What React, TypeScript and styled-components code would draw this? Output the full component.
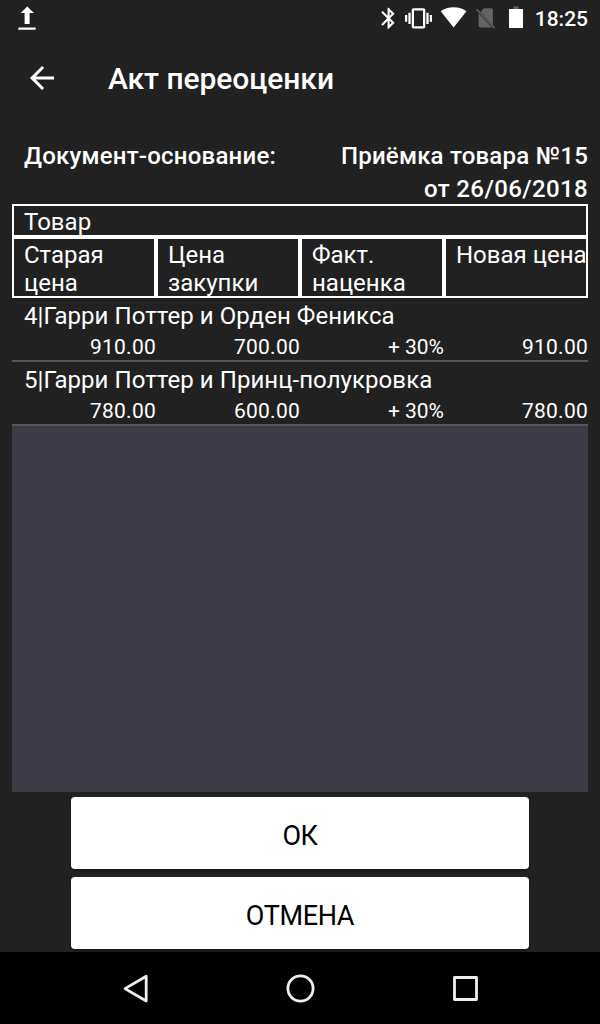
import React from "react";
import styled, { createGlobalStyle } from "styled-components";

const GlobalStyle = createGlobalStyle`
  *, *::before, *::after { box-sizing: border-box; }
  body { margin: 0; background: #212121; }
`;

const Screen = styled.div`
  display: flex;
  flex-direction: column;
  width: 600px;
  height: 1024px;
  background: #212121;
  color: #fff;
  font-family: Roboto, sans-serif;
  font-size: 24px;
  line-height: 28px;
`;

const StatusBar = styled.header`
  display: flex;
  align-items: center;
  height: 36px;
  padding: 0 12px 0 18px;

  svg { display: block; flex: none; }
`;

const StatusIcons = styled.div`
  display: flex;
  align-items: center;
  gap: 8px;
  margin-left: auto;
`;

const Clock = styled.time`
  width: 54px;
  margin-left: 11px;
  padding-top: 2px;
  font-size: 21px;
  font-weight: 500;
  line-height: 36px;
  text-align: right;
  white-space: nowrap;
`;

const Toolbar = styled.div`
  display: flex;
  align-items: center;
  height: 84px;
  padding-left: 24px;
`;

const BackButton = styled.button`
  display: flex;
  width: 36px;
  height: 36px;
  padding: 0;
  border: 0;
  background: none;
  color: #fff;
`;

const Title = styled.h1`
  margin: 2px 0 0 48px;
  font-size: 30px;
  font-weight: 500;
  letter-spacing: -0.05px;
  line-height: 36px;
  white-space: nowrap;
`;

const Main = styled.main`
  display: flex;
  flex: 1;
  flex-direction: column;
  padding: 20px 12px 0;
`;

const Basis = styled.div`
  display: flex;
  justify-content: space-between;
  height: 64px;
  padding-left: 12px;
  font-weight: 500;
  letter-spacing: 0.22px;
  line-height: 33px;
`;

const BasisValue = styled.div`
  text-align: right;
  white-space: nowrap;
`;

const BasisDate = styled.div`
  letter-spacing: 0.38px;
`;

const HeadRow = styled.div`
  display: grid;
  grid-template-columns: repeat(4, 144px);
`;

const HeadCell = styled.div<{ $wide?: boolean }>`
  grid-column: ${({ $wide }) => ($wide ? "1 / -1" : "auto")};
  height: ${({ $wide }) => ($wide ? 33 : 61)}px;
  padding: 2px 0 0 10px;
  border: 2px solid #fff;
  white-space: pre;
`;

const List = styled.div`
  flex: none;
  height: 494px;
  background: #3d3c46;
`;

const Item = styled.div`
  height: 64px;
  padding-top: 4px;
  border-bottom: 2px solid #55555e;
  background: #212121;
`;

const ItemName = styled.div`
  padding-left: 12px;
  letter-spacing: 0.06px;
  white-space: nowrap;
`;

const ItemValues = styled.div`
  display: grid;
  grid-template-columns: repeat(4, 144px);
  padding-top: 4px;
  font-size: 21px;
  line-height: 26px;
  text-align: right;
`;

const Value = styled.span<{ $percent: boolean }>`
  letter-spacing: ${({ $percent }) => ($percent ? "0" : "0.25px")};
`;

const Actions = styled.div`
  display: flex;
  flex-direction: column;
  align-items: center;
  gap: 8px;
  padding-top: 5px;
`;

const ActionButton = styled.button`
  width: 458px;
  height: 72px;
  padding: 6px 0 0;
  border: 0;
  border-radius: 4px;
  background: #fff;
  box-shadow: 0 2px 2px rgba(0, 0, 0, 0.3);
  color: #000;
  font: 400 27px/32px Roboto, sans-serif;
  letter-spacing: -0.35px;
`;

const NavBar = styled.nav`
  display: flex;
  flex: none;
  justify-content: center;
  align-items: center;
  gap: 129px;
  height: 72px;
  background: #000;

  svg { display: block; }
`;

const products = [
  { name: "4|Гарри Поттер и Орден Феникса", values: ["910.00", "700.00", "+ 30%", "910.00"] },
  { name: "5|Гарри Поттер и Принц-полукровка", values: ["780.00", "600.00", "+ 30%", "780.00"] },
];

const columns = ["Старая\nцена", "Цена\nзакупки", "Факт.\nнаценка", "Новая цена"];

const UploadIcon = () => (
  <svg width="18" height="36" fill="#fff">
    <path d="M9.3 6.5 16 13h-4.4v11h-5V13H2.6zM.3 27.4h17.4v2.3H.3z" />
  </svg>
);

const BluetoothIcon = () => (
  <svg width="21" height="36" fill="#fff">
    <path
      transform="translate(0 5.7) scale(1.05)"
      d="M17.71 7.71 12 2h-1v7.590L6.410 5 5 6.410 10.590 12 5 17.590 6.410 19 11 14.410V22h1l5.710-5.710-4.300-4.290 4.300-4.290zM13 5.830l1.880 1.880L13 9.590V5.830zm1.880 10.460L13 18.170v-3.760l1.880 1.880z"
    />
  </svg>
);

const VibrateIcon = () => (
  <svg width="27" height="36" fill="#fff">
    <path
      transform="translate(0 4.8) scale(1.125)"
      d="M0 15h2V9H0v6zm3 2h2V7H3v10zm19-8v6h2V9h-2zm-3 8h2V7h-2v10zM16.500 3h-9C6.670 3 6 3.670 6 4.500v15c0 .830.670 1.500 1.500 1.500h9c.830 0 1.500-.670 1.500-1.500v-15c0-.830-.670-1.500-1.500-1.500zM16 19H8V5h8v14z"
    />
  </svg>
);

const WifiIcon = () => (
  <svg width="28" height="36" fill="#fff">
    <path d="M13.600 27.500.7 11.300C4.200 8.700 8.600 7.200 13.600 7.200s9.400 1.500 12.900 4.100z" />
  </svg>
);

const NoSimIcon = () => (
  <svg width="20" height="36">
    <path d="M7.700 8.300h7.500c1 0 1.700.7 1.700 1.700v15.200L4.900 12zM2.600 13.200 16 27.500H4.300c-1 0-1.700-.7-1.700-1.700z" fill="#646464" />
    <path d="m.6 9.300 18 18.700" stroke="#646464" strokeWidth="1.600" />
  </svg>
);

const BatteryIcon = () => (
  <svg width="19" height="36">
    <path d="M9.500 6.500h5V9h-5z" fill="#646464" />
    <path d="M5 9h14v19H5z" fill="#fff" />
  </svg>
);

export default function App() {
  return (
    <>
      <GlobalStyle />
      <Screen>
        <StatusBar>
          <UploadIcon />
          <StatusIcons>
            <BluetoothIcon />
            <VibrateIcon />
            <WifiIcon />
            <NoSimIcon />
            <BatteryIcon />
          </StatusIcons>
          <Clock>18:25</Clock>
        </StatusBar>
        <Toolbar>
          <BackButton aria-label="Назад">
            <svg width="36" height="36" viewBox="0 0 24 24" fill="currentColor">
              <path d="M20 11H7.830l5.590-5.590L12 4l-8 8 8 8 1.410-1.410L7.830 13H20v-2z" />
            </svg>
          </BackButton>
          <Title>Акт переоценки</Title>
        </Toolbar>
        <Main>
          <Basis>
            <div>Документ-основание:</div>
            <BasisValue>
              <div>Приёмка товара №15</div>
              <BasisDate>от 26/06/2018</BasisDate>
            </BasisValue>
          </Basis>
          <HeadRow>
            <HeadCell $wide>Товар</HeadCell>
            {columns.map((label) => (
              <HeadCell key={label}>{label}</HeadCell>
            ))}
          </HeadRow>
          <List>
            {products.map((product) => (
              <Item key={product.name}>
                <ItemName>{product.name}</ItemName>
                <ItemValues>
                  {product.values.map((value, i) => (
                    <Value key={i} $percent={value.endsWith("%")}>
                      {value}
                    </Value>
                  ))}
                </ItemValues>
              </Item>
            ))}
          </List>
          <Actions>
            <ActionButton>ОК</ActionButton>
            <ActionButton>ОТМЕНА</ActionButton>
          </Actions>
        </Main>
        <NavBar>
          <svg width="36" height="36" fill="none" stroke="#eee" strokeWidth="2.800" strokeLinejoin="round">
            <path d="M29.200 6.200v24.800L8 18.600z" />
          </svg>
          <svg width="36" height="36" fill="none" stroke="#eee" strokeWidth="2.800">
            <circle cx="18.500" cy="18.500" r="12.600" />
          </svg>
          <svg width="36" height="36" fill="none" stroke="#eee" strokeWidth="2.800" strokeLinejoin="round">
            <path d="M7.500 7.500h22v22h-22z" />
          </svg>
        </NavBar>
      </Screen>
    </>
  );
}
